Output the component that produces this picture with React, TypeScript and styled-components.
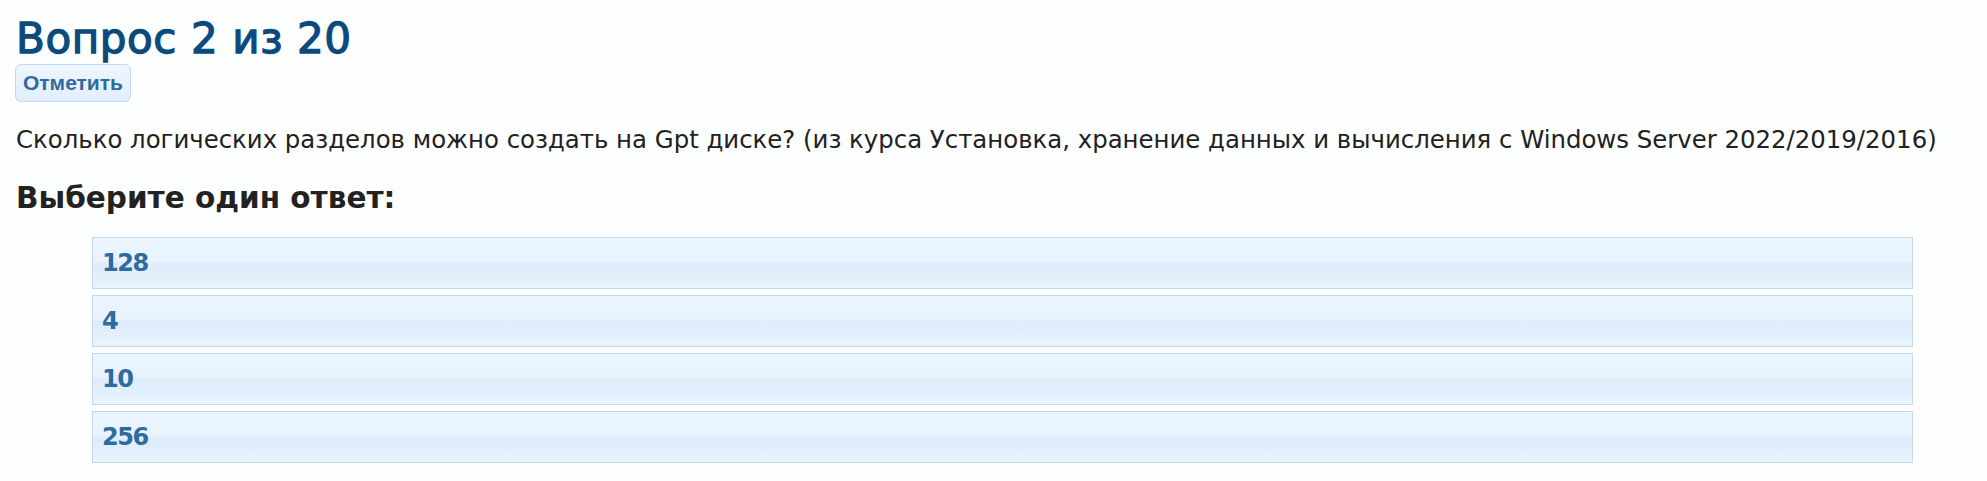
import styled, { createGlobalStyle } from "styled-components";

const GlobalStyle = createGlobalStyle`
  html, body {
    margin: 0;
    padding: 0;
    background: #fdfefe;
  }
  body {
    font-family: "DejaVu Sans", "Noto Sans", sans-serif;
    color: #212121;
  }
`;

const Page = styled.div`
  padding: 13px 16px 0 16px;
  display: flex;
  flex-direction: column;
  align-items: flex-start;
`;

const Title = styled.h1`
  margin: 0;
  font-family: "DejaVu Sans", sans-serif;
  font-weight: 400;
  font-size: 42px;
  line-height: 51px;
  letter-spacing: 0.6px;
  color: #0b4a7d;
  -webkit-text-stroke: 1.3px #0b4a7d;
`;

const FlagButton = styled.button`
  box-sizing: border-box;
  height: 38px;
  padding: 6px 7px;
  margin-left: -1px;
  border: 1px solid #c3d8ef;
  border-radius: 6px;
  background: linear-gradient(to bottom, #eef5fd 0%, #e2eefc 100%);
  font-family: "Liberation Sans", Arial, sans-serif;
  font-weight: 700;
  font-size: 21px;
  line-height: 24px;
  color: #2f6aa0;
  cursor: pointer;
`;

const Question = styled.p`
  margin: 20px 0 0 0;
  font-size: 24.4px;
  line-height: 36.6px;
  color: #212121;
  white-space: nowrap;
`;

const Prompt = styled.h2`
  margin: 22px 0 0 0;
  font-weight: 700;
  font-size: 29.5px;
  line-height: 35.4px;
  color: #222222;
`;

const Answers = styled.div`
  align-self: stretch;
  margin: 21px 58px 0 76px;
  display: flex;
  flex-direction: column;
  gap: 6px;
`;

const Answer = styled.label`
  box-sizing: border-box;
  height: 52px;
  display: flex;
  align-items: center;
  padding-left: 9px;
  border: 1px solid #c4d9ed;
  background: linear-gradient(
    to bottom,
    #ebf5fe 0%,
    #e9f3fe 46%,
    #ddecfb 52%,
    #e2effc 75%,
    #eaf4fd 100%
  );
  font-weight: 700;
  font-size: 24px;
  letter-spacing: -1.5px;
  color: #2d6ba1;
  cursor: pointer;
`;

const answers = ["128", "4", "10", "256"];

export default function App() {
  return (
    <>
      <GlobalStyle />
      <Page>
        <Title>Вопрос 2 из 20</Title>
        <FlagButton>Отметить</FlagButton>
        <Question>
          Сколько логических разделов можно создать на Gpt диске? (из курса
          Установка, хранение данных и вычисления с Windows Server
          2022/2019/2016)
        </Question>
        <Prompt>Выберите один ответ:</Prompt>
        <Answers>
          {answers.map((a) => (
            <Answer key={a}>{a}</Answer>
          ))}
        </Answers>
      </Page>
    </>
  );
}
